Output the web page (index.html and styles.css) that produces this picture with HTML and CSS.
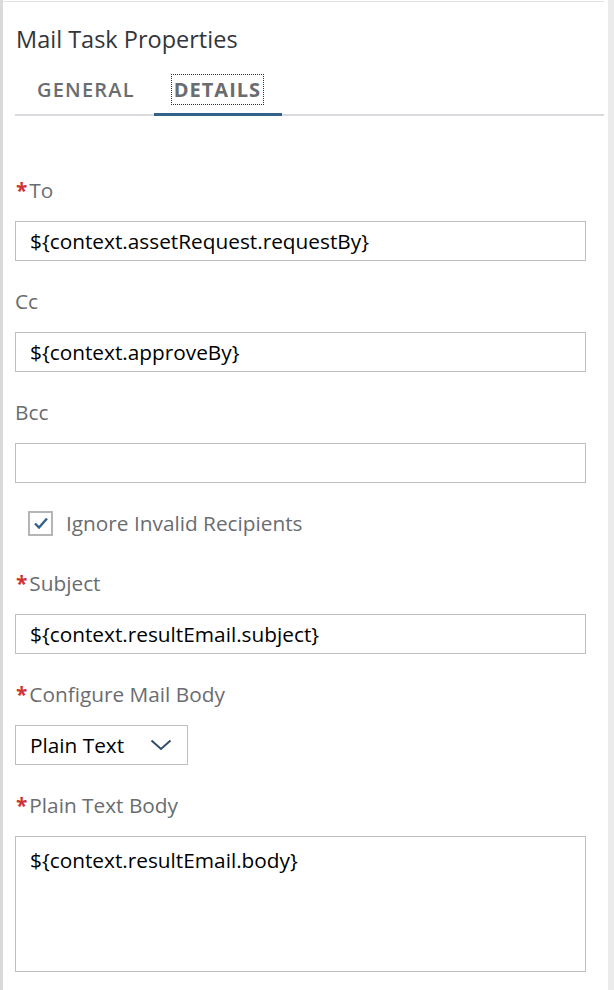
FILE: index.html
```html
<!DOCTYPE html>
<html lang="en">

<head>
    <meta charset="UTF-8">
    <meta name="viewport" content="width=device-width, initial-scale=1.0">
    <title>Mail Task Properties</title>
    <link rel="stylesheet" href="styles.css">
</head>

<body>
    <div class="panel">
        <div class="content">
            <h1 class="title">Mail Task Properties</h1>

            <div class="tabs">
                <div class="tab">GENERAL</div>
                <div class="tab active"><span class="focus">DETAILS</span></div>
            </div>

            <div class="form">
                <div class="field">
                    <label class="label required">To</label>
                    <input class="input" type="text" value="${context.assetRequest.requestBy}">
                </div>

                <div class="field">
                    <label class="label">Cc</label>
                    <input class="input" type="text" value="${context.approveBy}">
                </div>

                <div class="field">
                    <label class="label">Bcc</label>
                    <input class="input" type="text" value="">
                </div>

                <div class="check-row">
                    <span class="checkbox">
                        <svg width="16" height="14" viewBox="0 0 16 14">
                            <polyline points="2,7.5 6,11.5 14,2.5" fill="none" stroke="#33628a" stroke-width="2.4"/>
                        </svg>
                    </span>
                    <span class="check-label">Ignore Invalid Recipients</span>
                </div>

                <div class="field">
                    <label class="label required">Subject</label>
                    <input class="input" type="text" value="${context.resultEmail.subject}">
                </div>

                <div class="field">
                    <label class="label required">Configure Mail Body</label>
                    <div class="select">
                        <span>Plain Text</span>
                        <svg width="22" height="12" viewBox="0 0 22 12">
                            <polyline points="1.5,1.5 11,10 20.5,1.5" fill="none" stroke="#2f4d6a" stroke-width="2"/>
                        </svg>
                    </div>
                </div>

                <div class="field">
                    <label class="label required">Plain Text Body</label>
                    <textarea class="textarea">${context.resultEmail.body}</textarea>
                </div>
            </div>
        </div>
    </div>
</body>

</html>
```

FILE: styles.css
```css
body {
    margin: 0;
    background-color: #ebebeb;
    font-family: "Open Sans", "Liberation Sans", sans-serif;
}

/* 面板 */
.panel {
    width: 608px;
    height: 990px;
    box-sizing: border-box;
    border-left: 3px solid #dadada;
    background-color: #fff;
    padding-top: 1px;
}

.content {
    margin-right: 4px;
    border-top: 1px solid #e3e3e3;
    padding-left: 12px;
}

.title {
    margin: 23px 0 0 1px;
    font-size: 23.5px;
    line-height: 28px;
    font-weight: normal;
    color: #32363a;
}

/* 分頁 */
.tabs {
    display: flex;
    margin-top: 9px;
    border-bottom: 2px solid #d9d9de;
}

.tab {
    padding: 3px 19px 0 22px;
    height: 54px;
    margin-bottom: -2px;
    box-sizing: border-box;
    border-bottom: 3px solid transparent;
    display: flex;
    align-items: center;
    font-size: 20px;
    letter-spacing: 1.2px;
    font-weight: 600;
    color: #6a6d70;
}

.tab.active {
    padding-left: 18px;
    padding-right: 19px;
    border-bottom-color: #346187;
    font-weight: bold;
    letter-spacing: 1px;
}

.focus {
    outline: 1px dotted #333;
    padding: 1px 2px;
}

/* 表單 */
.form {
    padding-top: 62px;
    padding-right: 18px;
}

.field {
    margin-bottom: 28px;
}

.label {
    display: block;
    font-size: 20.8px;
    line-height: 24px;
    color: #6a6d70;
    margin-bottom: 19px;
}

.label.required::before {
    content: "*";
    color: #c33;
    font-weight: bold;
    margin-right: 2px;
    margin-left: 1px;
}

.input {
    display: block;
    width: 100%;
    height: 40px;
    box-sizing: border-box;
    border: 1px solid #bfbfbf;
    padding: 0 14px;
    font-family: inherit;
    font-size: 20.8px;
    color: #000;
    outline: none;
}

.check-row {
    display: flex;
    align-items: center;
    height: 24px;
    padding-left: 13px;
    margin-bottom: 36px;
}

.checkbox {
    width: 25px;
    height: 25px;
    box-sizing: border-box;
    border: 2px solid #b5b5b5;
    display: flex;
    align-items: center;
    justify-content: center;
    margin-right: 13px;
}

.check-label {
    font-size: 20.8px;
    color: #6a6d70;
}

.select {
    width: 173px;
    height: 40px;
    box-sizing: border-box;
    border: 1px solid #bfbfbf;
    display: flex;
    align-items: center;
    justify-content: space-between;
    padding: 0 15px 0 14px;
    font-size: 20.8px;
    color: #000;
}

.textarea {
    display: block;
    width: 100%;
    height: 136px;
    box-sizing: border-box;
    border: 1px solid #bfbfbf;
    padding: 9px 14px;
    font-family: inherit;
    font-size: 20.8px;
    color: #000;
    resize: none;
    outline: none;
}
```
